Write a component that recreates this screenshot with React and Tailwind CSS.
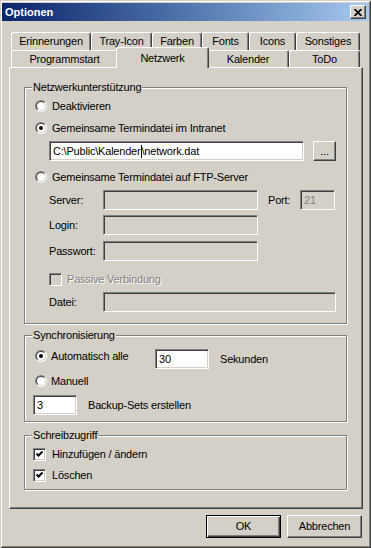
import React from "react";

/* ---------------------------
   CLASSIC WIN32 CONTROLS
--------------------------- */
function Radio({ checked }) {
  return (
    <span className="w-[12px] h-[12px] shrink-0 rounded-full border border-[#808080] border-r-white border-b-white">
      <span className="flex items-center justify-center w-full h-full rounded-full border border-[#404040] border-r-[#D4D0C8] border-b-[#D4D0C8] bg-white">
        {checked && <span className="w-[4px] h-[4px] rounded-full bg-black" />}
      </span>
    </span>
  );
}

function Check({ checked, disabled }) {
  return (
    <span
      className={`flex items-center justify-center w-[13px] h-[13px] shrink-0 border border-[#808080] border-r-white border-b-white shadow-[inset_1px_1px_0_#404040,inset_-1px_-1px_0_#D4D0C8] ${
        disabled ? "bg-[#D4D0C8]" : "bg-white"
      }`}
    >
      {checked && (
        <svg width="7" height="7" viewBox="0 0 7 7">
          <polyline points="0.5,2.5 2.5,4.5 6.5,0.5" fill="none" stroke="black" strokeWidth="2" />
        </svg>
      )}
    </span>
  );
}

function Edit({ children, disabled, className = "" }) {
  return (
    <div
      className={`h-[20px] shrink-0 flex items-center pl-[3px] border border-[#808080] border-r-white border-b-white shadow-[inset_1px_1px_0_#404040,inset_-1px_-1px_0_#D4D0C8] ${
        disabled ? "bg-[#D4D0C8] text-[#808080]" : "bg-white"
      } ${className}`}
    >
      {children}
    </div>
  );
}

function Button({ children, isDefault, className = "" }) {
  return (
    <div
      className={`flex items-center justify-center bg-[#D4D0C8] ${
        isDefault
          ? "border border-black shadow-[inset_1px_1px_0_#fff,inset_-1px_-1px_0_#404040,inset_-2px_-2px_0_#808080]"
          : "border border-white border-r-[#404040] border-b-[#404040] shadow-[inset_-1px_-1px_0_#808080]"
      } ${className}`}
    >
      {children}
    </div>
  );
}

function Group({ title, className = "", children }) {
  return (
    <fieldset
      className={`w-[323px] border border-[#808080] shadow-[inset_1px_1px_0_#fff,1px_1px_0_#fff] ${className}`}
    >
      <legend className="ml-[7px] px-[1px] leading-[13px] bg-[#D4D0C8]">{title}</legend>
      {children}
    </fieldset>
  );
}

function BackTab({ label, className }) {
  return (
    <div
      className={`h-[18px] flex items-center justify-center rounded-t-[3px] border-t border-l border-white border-r border-r-[#404040] shadow-[inset_-1px_0_0_#808080] ${className}`}
    >
      {label}
    </div>
  );
}

function FrontTab({ label, className, selected }) {
  if (selected) {
    return (
      <div
        className={`relative z-10 h-[21px] -mb-[1px] -mx-[2px] bg-[#D4D0C8] flex items-center justify-center rounded-t-[3px] border-t border-l border-white border-r border-r-[#404040] shadow-[inset_-1px_0_0_#808080] ${className}`}
      >
        {label}
      </div>
    );
  }
  return (
    <div
      className={`h-[17px] flex items-center justify-center rounded-t-[3px] border-t border-l border-white border-r border-r-[#404040] shadow-[inset_-1px_0_0_#808080] ${className}`}
    >
      {label}
    </div>
  );
}

/* ---------------------------
   DIALOG
--------------------------- */
export default function App() {
  return (
    <div className="w-[371px] h-[548px] overflow-hidden bg-[#D4D0C8] text-black text-[11px] leading-[13px] tracking-[-0.2px] font-['Liberation_Sans',Arial,sans-serif] shadow-[inset_1px_1px_0_#D4D0C8,inset_-1px_-1px_0_#404040,inset_2px_2px_0_#fff,inset_-2px_-2px_0_#808080]">
      {/* Title bar */}
      <div className="mx-[2px] mt-[3px] h-[18px] flex items-center justify-between bg-gradient-to-r from-[#0A246A] to-[#A6CAF0]">
        <span className="pl-[3px] text-white font-bold tracking-normal">Optionen</span>
        <div className="mr-[3px] w-[16px] h-[14px] flex items-center justify-center bg-[#D4D0C8] border border-white border-r-[#404040] border-b-[#404040] shadow-[inset_-1px_-1px_0_#808080]">
          <svg width="8" height="7" viewBox="0 0 8 7">
            <path d="M0.5 0 L7.5 7 M7.5 0 L0.5 7" stroke="black" strokeWidth="1.7" />
          </svg>
        </div>
      </div>

      {/* Tabs */}
      <div className="ml-[9px] mt-[11px] w-[354px]">
        <div className="pl-[2px] flex">
          <BackTab label="Erinnerungen" className="w-[80px]" />
          <BackTab label="Tray-Icon" className="w-[61px]" />
          <BackTab label="Farben" className="w-[50px]" />
          <BackTab label="Fonts" className="w-[47px]" />
          <BackTab label="Icons" className="w-[47px]" />
          <BackTab label="Sonstiges" className="w-[64px]" />
        </div>
        <div className="pl-[2px] flex items-end h-[17px]">
          <FrontTab label="Programmstart" className="w-[107px]" />
          <FrontTab label="Netzwerk" className="w-[93px]" selected />
          <FrontTab label="Kalender" className="w-[82px]" />
          <FrontTab label="ToDo" className="w-[71px]" />
        </div>

        {/* Panel */}
        <div className="h-[442px] px-[14px] pt-[13px] border-t border-l border-white border-r border-b border-r-[#404040] border-b-[#404040] shadow-[inset_-1px_-1px_0_#808080]">
          <Group title="Netzwerkunterstützung" className="pb-[11px]">
            <div className="mt-[4px] h-[16px] ml-[10px] flex items-center gap-[5px]">
              <Radio />
              <span>Deaktivieren</span>
            </div>
            <div className="mt-[6px] h-[16px] ml-[10px] flex items-center gap-[5px]">
              <Radio checked />
              <span>Gemeinsame Termindatei im Intranet</span>
            </div>
            <div className="mt-[5px] ml-[24px] flex items-center gap-[9px]">
              <Edit className="w-[255px]">
                <span>{"C:\\Public\\Kalender"}</span>
                <span className="w-[1px] h-[13px] bg-black" />
                <span>{"\\network.dat"}</span>
              </Edit>
              <Button className="w-[23px] h-[20px]">...</Button>
            </div>
            <div className="mt-[8px] h-[16px] ml-[10px] flex items-center gap-[5px]">
              <Radio />
              <span>Gemeinsame Termindatei auf FTP-Server</span>
            </div>
            <div className="mt-[5px] ml-[24px] flex items-center">
              <span className="w-[54px]">Server:</span>
              <Edit disabled className="w-[155px]" />
              <span className="ml-[10px] w-[32px]">Port:</span>
              <Edit disabled className="w-[35px]">21</Edit>
            </div>
            <div className="mt-[5px] ml-[24px] flex items-center">
              <span className="w-[54px]">Login:</span>
              <Edit disabled className="w-[155px]" />
            </div>
            <div className="mt-[6px] ml-[24px] flex items-center">
              <span className="w-[54px]">Passwort:</span>
              <Edit disabled className="w-[155px]" />
            </div>
            <div className="mt-[10px] h-[16px] ml-[24px] flex items-center gap-[5px]">
              <Check disabled />
              <span className="text-[#808080] [text-shadow:1px_1px_0_#fff]">Passive Verbindung</span>
            </div>
            <div className="mt-[5px] ml-[24px] flex items-center">
              <span className="w-[54px]">Datei:</span>
              <Edit disabled className="w-[233px]" />
            </div>
          </Group>

          <Group title="Synchronisierung" className="mt-[5px] pb-[6px]">
            <div className="mt-[7px] h-[20px] flex">
              <div className="ml-[10px] -mt-[1px] h-[16px] w-[120px] flex items-center gap-[4px]">
                <Radio checked />
                <span>Automatisch alle</span>
              </div>
              <Edit className="w-[54px]">30</Edit>
              <span className="ml-[11px] self-center">Sekunden</span>
            </div>
            <div className="mt-[4px] h-[16px] ml-[10px] flex items-center gap-[4px]">
              <Radio />
              <span>Manuell</span>
            </div>
            <div className="mt-[6px] ml-[8px] flex items-center gap-[11px]">
              <Edit className="w-[44px]">3</Edit>
              <span>Backup-Sets erstellen</span>
            </div>
          </Group>

          <Group title="Schreibzugriff" className="mt-[7px] pb-[6px]">
            <div className="mt-[4px] h-[16px] ml-[8px] flex items-center gap-[6px]">
              <Check checked />
              <span>Hinzufügen / ändern</span>
            </div>
            <div className="mt-[5px] h-[16px] ml-[8px] flex items-center gap-[6px]">
              <Check checked />
              <span>Löschen</span>
            </div>
          </Group>
        </div>

        {/* Buttons */}
        <div className="mt-[6px] pr-[1px] flex justify-end gap-[6px]">
          <Button isDefault className="w-[75px] h-[23px]">OK</Button>
          <Button className="w-[75px] h-[23px]">Abbrechen</Button>
        </div>
      </div>
    </div>
  );
}
